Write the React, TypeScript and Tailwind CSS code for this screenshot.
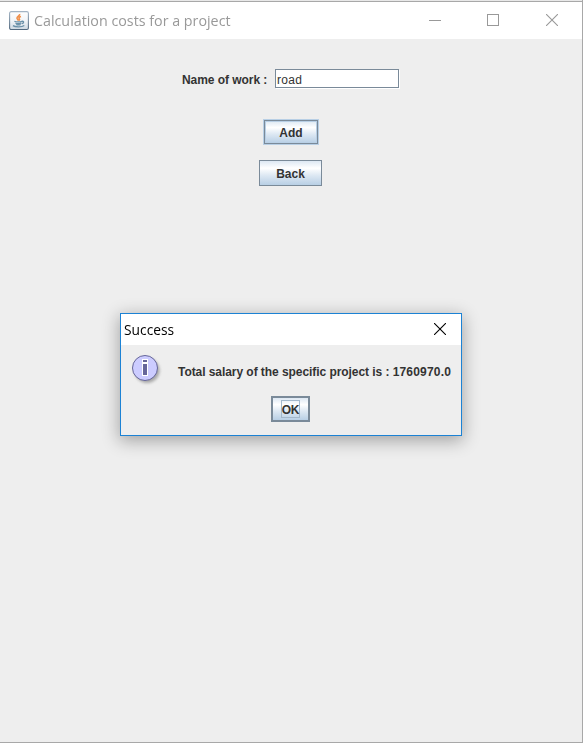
import React from "react";

const steel = "bg-[linear-gradient(to_bottom,#dde8f3_0%,#ffffff_30%,#dde8f3_60%,#b8cfe5_100%)]";

function JavaIcon() {
  return (
    <svg width="20" height="20" viewBox="0 0 20 20" fill="none">
      <defs>
        <linearGradient id="tile" x1="0" y1="0" x2="0" y2="1">
          <stop offset="0" stopColor="#ffffff" />
          <stop offset="0.5" stopColor="#f2f5f8" />
          <stop offset="1" stopColor="#cfd9e2" />
        </linearGradient>
        <linearGradient id="edge" x1="0" y1="0" x2="0" y2="1">
          <stop offset="0" stopColor="#a3b4c4" />
          <stop offset="1" stopColor="#52697f" />
        </linearGradient>
      </defs>
      <rect x="0.6" y="0.6" width="18.8" height="17.9" rx="1.6" fill="url(#tile)" stroke="url(#edge)" strokeWidth="1.1" />
      <path d="M10.6 3c.7 1.7-3 2.5-2.6 4.3.2.9 1.3 1.3 1.2 2.4M12 5.4c-2 .6-2.4 1.4-1.7 2.3.5.6.3 1.2-.3 1.8" stroke="#f08f4a" strokeWidth="1.6" />
      <path d="M5.4 10.2c1.6.9 5.6.9 7.4.1M6.4 12c1.3.8 4.6.8 6 0M7.2 13.5c1.3.5 3.4.5 4.5 0M3.9 14.6c2.4 1.6 9 1.6 11.4-.2M12.8 10.4c2.3-.7 2.5 1.5.1 2.3" stroke="#6a90a8" strokeWidth="1.3" />
    </svg>
  );
}

function Cross({ color }: { color: string }) {
  return (
    <svg width="12" height="12" viewBox="0 0 12 12" stroke={color} strokeWidth="1.1">
      <path d="M0 0L12 12M12 0L0 12" />
    </svg>
  );
}

function InfoIcon() {
  return (
    <svg width="32" height="32" viewBox="0 0 32 32">
      <defs>
        <filter id="soft" x="-20%" y="-20%" width="150%" height="150%">
          <feGaussianBlur stdDeviation="1.4" />
        </filter>
      </defs>
      <circle cx="16" cy="16.5" r="12.5" fill="#777777" opacity="0.6" filter="url(#soft)" />
      <circle cx="14" cy="14" r="12.5" fill="#ccccff" stroke="#666699" />
      <path d="M11 5h6v17h-6z" fill="#ffffff" />
      <path d="M12 6h4v2h-4zM12 10h4v11h-4z" fill="#666699" />
    </svg>
  );
}

function Dialog() {
  return (
    <section className="absolute left-[120px] top-[313px] flex h-[123px] w-[342px] flex-col border border-[#1c82d4] bg-[#eeeeee] shadow-[0_4px_16px_1px_rgba(0,0,0,0.31)]">
      <header className="flex h-[31px] shrink-0 items-center justify-between bg-white pl-[3px] pr-[15px]">
        <h2 className="origin-left scale-x-[0.92] whitespace-nowrap font-['Open_Sans',sans-serif] text-[15px] text-black">Success</h2>
        <button aria-label="Close" className="-mt-px"><Cross color="#000000" /></button>
      </header>
      <div className="flex h-[51px] shrink-0 pl-[10px] pt-[9px]">
        <InfoIcon />
        <p className="ml-[15px] mt-[10px] whitespace-nowrap text-[12px] font-bold leading-[16px] tracking-[-0.06px]">
          Total salary of the specific project is : <span className="tracking-[0.18px]">1760970.0</span>
        </p>
      </div>
      <button className={`ml-[150px] flex h-[26px] w-[39px] items-center justify-center border-2 border-[#7a8a99] text-[12px] font-bold ${steel}`}>
        <span className="flex h-[18px] w-[19px] items-center justify-center border border-[#a3b8cc] pt-px tracking-[-0.3px]">OK</span>
      </button>
    </section>
  );
}

export default function App() {
  return (
    <main className="relative flex h-[743px] w-[583px] flex-col overflow-hidden border-b border-r border-[#a8a8a8] bg-[#eeeeee] font-['Liberation_Sans',Arial,sans-serif] text-[#333333]">
      <div className="h-px shrink-0 bg-[#e8e8e8]" />
      <header className="flex h-[38px] shrink-0 items-center border-t border-[#a8a8a8] bg-white pl-[9px] pr-[24px]">
        <JavaIcon />
        <h1 className="ml-[5px] origin-left scale-x-[0.952] whitespace-nowrap font-['Open_Sans',sans-serif] text-[15px] text-[#999999]">Calculation costs for a project</h1>
        <div className="ml-auto flex items-center">
          <button aria-label="Minimize" className="mr-[46px] -mt-px h-px w-[12px] bg-[#999999]" />
          <button aria-label="Maximize" className="mr-[47px] -mt-px h-[12px] w-[12px] border border-[#999999]" />
          <button aria-label="Close" className="-mt-px"><Cross color="#999999" /></button>
        </div>
      </header>
      <form className="flex flex-col" onSubmit={(e) => e.preventDefault()}>
        <div className="flex h-[50px] pl-[182px] pt-[30px]">
          <label htmlFor="work" className="w-[93px] whitespace-nowrap pt-px text-[12px] font-bold leading-[21px] tracking-[-0.05px]">Name of work :</label>
          <input id="work" defaultValue="road" className="h-[19px] w-[124px] border border-[#7a8a99] bg-white pl-px pt-[2px] text-[12px] tracking-[0.3px] shadow-[1px_1px_0_#ffffff] outline-none" />
        </div>
        <button className={`ml-[264px] mt-[31px] h-[24px] w-[54px] border border-[#7a8a99] pt-[2px] text-[12px] font-bold shadow-[0_0_0_1px_#b8cfe5,inset_0_0_0_1px_#b8cfe5] ${steel}`}>Add</button>
        <button className={`ml-[259px] mt-[16px] h-[26px] w-[63px] border border-[#7a8a99] pt-[2px] text-[12px] font-bold ${steel}`}>Back</button>
      </form>
      <Dialog />
    </main>
  );
}
